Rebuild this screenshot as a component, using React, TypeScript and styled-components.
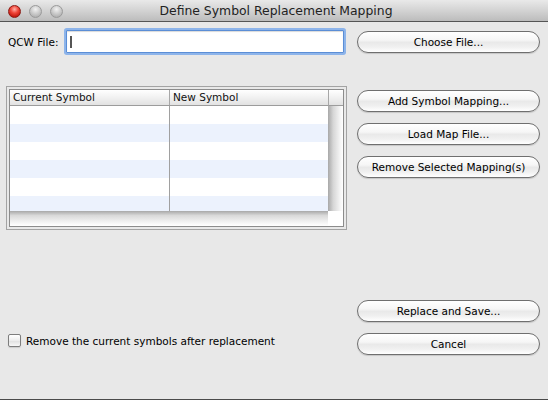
import React from "react";
import styled, { createGlobalStyle } from "styled-components";

const Global = createGlobalStyle`
  html, body { margin: 0; padding: 0; background: #e8e8e8; }
  body { font-family: "DejaVu Sans", "Liberation Sans", sans-serif; }
  * { box-sizing: border-box; }
`;

const Win = styled.div`
  width: 548px;
  height: 400px;
  background: #e8e8e8;
  display: flex;
  flex-direction: column;
  border-bottom: 1px solid #4a4a4a;
`;

const TitleBar = styled.div`
  height: 22px;
  flex: none;
  display: flex;
  align-items: center;
  position: relative;
  background: linear-gradient(#e9e9e9, #d3d3d3 50%, #bcbcbc);
  border-bottom: 1px solid #555;
`;

const Lights = styled.div`
  display: flex;
  gap: 8px;
  padding-left: 8px;
  padding-top: 1px;
`;

const Light = styled.div<{ $red?: boolean }>`
  width: 13px;
  height: 13px;
  border-radius: 50%;
  border: 1px solid ${(p) => (p.$red ? "#8c1a14" : "#9a9a9a")};
  background: ${(p) =>
    p.$red
      ? "radial-gradient(circle at 50% 30%, #ffb1a8 0%, #f0473a 40%, #c0170d 80%, #e24a3d 100%)"
      : "radial-gradient(circle at 50% 30%, #f2f2f2 0%, #cdcdcd 45%, #b2b2b2 80%, #d2d2d2 100%)"};
`;

const Title = styled.div`
  position: absolute;
  left: 0;
  right: 0;
  top: 0;
  bottom: 0;
  display: flex;
  align-items: center;
  justify-content: center;
  font-size: 12.4px;
  color: #222;
  padding-left: 4px;
  pointer-events: none;
`;

const Body = styled.div`
  flex: 1;
  display: grid;
  grid-template-columns: 341px 183px;
  column-gap: 10px;
  padding: 0 8px 0 6px;
  grid-template-rows: auto auto 1fr auto;
`;

const FileRow = styled.div`
  display: flex;
  align-items: center;
  padding-top: 8px;
  padding-left: 2px;
  padding-right: 3px;
`;

const Label = styled.span`
  font-size: 10.5px;
  color: #000;
  margin-right: 8px;
  white-space: nowrap;
  flex: none;
`;

const TextField = styled.div`
  flex: 1;
  height: 23px;
  background: #fff;
  border: 1px solid #5b8ed6;
  box-shadow: 0 0 0 2px #8db4ea, inset 0 1px 1px rgba(0,0,0,0.15);
  border-radius: 1px;
  display: flex;
  align-items: center;
  padding-left: 3px;
`;

const Caret = styled.span`
  width: 2px;
  height: 12px;
  background: #555;
`;

const ButtonCell = styled.div<{ $top: number }>`
  padding-top: ${(p) => p.$top}px;
  display: flex;
  flex-direction: column;
  gap: 11px;
`;

const Button = styled.button`
  width: 183px;
  height: 22px;
  border-radius: 11px;
  border: 1px solid #6f6f6f;
  background: linear-gradient(#ffffff 0%, #f6f6f6 40%, #e9e9e9 52%, #f0f0f0 75%, #ffffff 100%);
  box-shadow: 0 1px 1px rgba(0,0,0,0.15);
  font-family: "DejaVu Sans", "Liberation Sans", sans-serif;
  font-size: 10.5px;
  color: #000;
  padding: 0;
  display: flex;
  align-items: center;
  justify-content: center;
  white-space: nowrap;
`;

const TableOuter = styled.div`
  margin-top: 33px;
  height: 144px;
  border: 1px solid #a3a3a3;
  padding: 2px;
  background: #e8e8e8;
`;

const TableInner = styled.div`
  height: 100%;
  border: 1px solid #8c8c8c;
  background: #fff;
  display: grid;
  grid-template-columns: 1fr 15px;
  grid-template-rows: 16px 105px 1fr;
`;

const Header = styled.div`
  display: grid;
  grid-template-columns: 160px 1fr;
  background: linear-gradient(#ffffff, #f1f1f1 50%, #e2e2e2);
  border-bottom: 1px solid #9c9c9c;
`;

const HeaderCell = styled.div<{ $divider?: boolean }>`
  font-size: 10.5px;
  color: #111;
  padding-left: 3px;
  line-height: 15px;
  white-space: nowrap;
  border-right: ${(p) => (p.$divider ? "1px solid #a7a7a7" : "none")};
`;

const Corner = styled.div`
  background: linear-gradient(#ffffff, #f1f1f1 50%, #e2e2e2);
  border-bottom: 1px solid #9c9c9c;
  border-left: 1px solid #a7a7a7;
`;

const Rows = styled.div`
  display: flex;
  flex-direction: column;
  overflow: hidden;
  position: relative;
`;

const Row = styled.div<{ $alt: boolean }>`
  height: 18px;
  flex: none;
  background: ${(p) => (p.$alt ? "#ecf2fd" : "#ffffff")};
`;

const ColLine = styled.div`
  position: absolute;
  top: 0;
  bottom: 0;
  left: 159px;
  width: 1px;
  background: #a0a0a0;
`;

const VShadow = styled.div`
  background: linear-gradient(90deg, #a8a8a8, #d6d6d6 35%, #f4f4f4 80%, #ffffff);
`;

const HShadow = styled.div`
  background: linear-gradient(#a8a8a8, #d9d9d9 30%, #f3f3f3 75%, #ffffff);
`;

const Blank = styled.div`
  background: #fff;
`;

const CheckRow = styled.label`
  display: flex;
  align-items: center;
  gap: 5px;
  padding-left: 2px;
  padding-bottom: 52px;
  font-size: 10.5px;
  color: #000;
  align-self: end;
  white-space: nowrap;
`;

const Box = styled.span`
  width: 13px;
  height: 13px;
  border: 1px solid #7d7d7d;
  border-radius: 2px;
  background: linear-gradient(#ffffff, #ededed 50%, #e1e1e1 55%, #f7f7f7);
  box-shadow: 0 1px 1px rgba(0,0,0,0.12);
`;

const BottomButtons = styled.div`
  display: flex;
  flex-direction: column;
  gap: 11px;
  padding-bottom: 44px;
  align-self: end;
`;

export default function App() {
  const rows = [0, 1, 2, 3, 4, 5];
  return (
    <>
      <Global />
      <Win>
        <TitleBar>
          <Lights>
            <Light $red />
            <Light />
            <Light />
          </Lights>
          <Title>Define Symbol Replacement Mapping</Title>
        </TitleBar>
        <Body>
          <FileRow>
            <Label>QCW File:</Label>
            <TextField>
              <Caret />
            </TextField>
          </FileRow>
          <ButtonCell $top={9}>
            <Button>Choose File...</Button>
          </ButtonCell>

          <TableOuter>
            <TableInner>
              <Header>
                <HeaderCell $divider>Current Symbol</HeaderCell>
                <HeaderCell>New Symbol</HeaderCell>
              </Header>
              <Corner />
              <Rows>
                {rows.map((r) => (
                  <Row key={r} $alt={r % 2 === 1} />
                ))}
                <ColLine />
              </Rows>
              <VShadow />
              <HShadow />
              <Blank />
            </TableInner>
          </TableOuter>
          <ButtonCell $top={37}>
            <Button>Add Symbol Mapping...</Button>
            <Button>Load Map File...</Button>
            <Button>Remove Selected Mapping(s)</Button>
          </ButtonCell>

          <div />
          <div />

          <CheckRow>
            <Box />
            Remove the current symbols after replacement
          </CheckRow>
          <BottomButtons>
            <Button>Replace and Save...</Button>
            <Button>Cancel</Button>
          </BottomButtons>
        </Body>
      </Win>
    </>
  );
}
